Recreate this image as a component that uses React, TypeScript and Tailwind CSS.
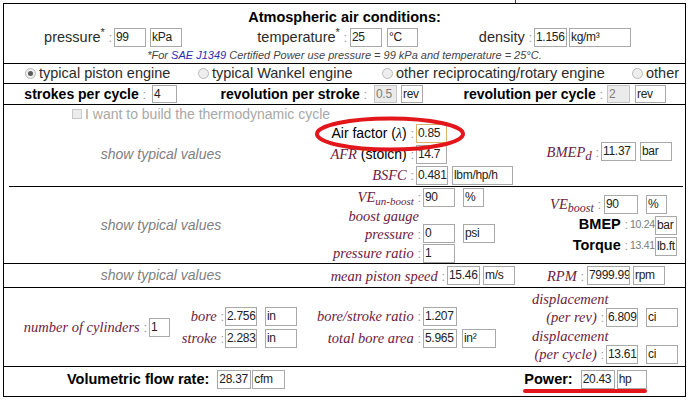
import React from "react";

const SERIF = "font-['Liberation_Serif',serif] italic text-[#6d2142] text-[14.5px]";

function Colon() {
  return (
    <span className="font-normal not-italic font-['Liberation_Sans',Arial,sans-serif] text-[13px] text-[#9a9a9a]">
      &nbsp;:
    </span>
  );
}

type Tone = "normal" | "disabled" | "focus";
const TONES: Record<Tone, string> = {
  normal: "border-[#a9a9a9] bg-white text-[#222]",
  disabled: "border-[#c4c4c4] bg-[#ebebeb] text-[#7d7d7d]",
  focus: "border-[#d8b36a] bg-white text-[#222]",
};

function Box({
  children,
  w,
  cls = "",
  tone = "normal",
  h = "h-[19px]",
}: {
  children?: React.ReactNode;
  w: string;
  cls?: string;
  tone?: Tone;
  h?: string;
}) {
  return (
    <div
      className={`${w} ${h} ${cls} ${TONES[tone]} shrink-0 border pl-[1px] text-[12px] tracking-[-0.3px] leading-[17px] font-normal not-italic font-['Liberation_Sans',Arial,sans-serif] whitespace-nowrap overflow-hidden`}
    >
      {children}
    </div>
  );
}

function Radio({ on }: { on?: boolean }) {
  return (
    <div className="w-[11px] h-[11px] shrink-0 rounded-full border border-[#b9b9b9] bg-[#eeeeee] flex items-center justify-center">
      {on && <div className="w-[5px] h-[5px] rounded-full bg-[#5c5c5c]" />}
    </div>
  );
}

function Typical() {
  return (
    <div className="w-[314px] shrink-0 flex items-center justify-center italic text-[14px] text-[#808080]">
      show typical values
    </div>
  );
}

export default function App() {
  return (
    <div className="w-[691px] h-[400px] bg-white font-['Liberation_Sans',Arial,sans-serif] text-[#2b2b2b] overflow-hidden">
      <div className="h-[3px] flex">
        <div className="ml-[515px] w-px bg-[#553344]" />
      </div>
      <div className="ml-[3px] w-[683px] h-[394px] border border-black flex flex-col">
        {/* Atmospheric air conditions */}
        <div className="h-[60px] shrink-0 border-b border-black flex flex-col">
          <div className="h-[23px] pt-[4px] leading-[18px] text-center font-bold text-[14.5px] text-black">
            Atmospheric air conditions:
          </div>
          <div className="h-[21px] flex items-center text-[14.5px]">
            <div className="w-[108px] shrink-0 text-right whitespace-nowrap">
              pressure<sup>*</sup>
              <Colon />
            </div>
            <Box w="w-[32px]" cls="ml-[2px]">99</Box>
            <Box w="w-[32px]" cls="ml-[4px]">kPa</Box>
            <div className="w-[165px] shrink-0 text-right whitespace-nowrap">
              temperature<sup>*</sup>
              <Colon />
            </div>
            <Box w="w-[32px]" cls="ml-[3px]">25</Box>
            <Box w="w-[31px]" cls="ml-[5px]">°C</Box>
            <div className="w-[114px] shrink-0 text-right whitespace-nowrap">
              density
              <Colon />
            </div>
            <Box w="w-[33px]" cls="ml-[2px]">1.156</Box>
            <Box w="w-[62px]" cls="ml-[2px]">kg/m³</Box>
          </div>
          <div className="h-[14px] leading-[14px] text-center italic text-[11px] text-[#444]">
            *For <span className="text-[#2b2bb0]">SAE J1349</span> Certified Power use pressure = 99 kPa and
            temperature = 25°C.
          </div>
        </div>

        {/* engine type */}
        <div className="h-[20px] shrink-0 border-b border-black flex items-center text-[14.5px]">
          <div className="ml-[21px] w-[173px] shrink-0 flex items-center">
            <Radio on />
            <span className="ml-[3px] whitespace-nowrap">typical piston engine</span>
          </div>
          <div className="w-[184px] shrink-0 flex items-center">
            <Radio />
            <span className="ml-[3px] whitespace-nowrap">typical Wankel engine</span>
          </div>
          <div className="w-[250px] shrink-0 flex items-center">
            <Radio />
            <span className="ml-[3px] whitespace-nowrap">other reciprocating/rotary engine</span>
          </div>
          <div className="flex items-center">
            <Radio />
            <span className="ml-[3px] whitespace-nowrap">other</span>
          </div>
        </div>

        {/* strokes */}
        <div className="h-[21px] shrink-0 border-b border-black flex items-center text-[14px] font-bold text-black">
          <div className="w-[142px] shrink-0 text-right whitespace-nowrap">
            strokes per cycle
            <Colon />
          </div>
          <Box w="w-[25px]" h="h-[18px]" cls="ml-[6px]">4</Box>
          <div className="w-[190px] shrink-0 text-right whitespace-nowrap">
            revolution per stroke
            <Colon />
          </div>
          <Box w="w-[23px]" h="h-[18px]" cls="ml-[7px]" tone="disabled">0.5</Box>
          <Box w="w-[22px]" h="h-[18px]" cls="ml-[4px]">rev</Box>
          <div className="w-[180px] shrink-0 text-right whitespace-nowrap">
            revolution per cycle
            <Colon />
          </div>
          <Box w="w-[23px]" h="h-[18px]" cls="ml-[4px]" tone="disabled">2</Box>
          <Box w="w-[31px]" h="h-[18px]" cls="ml-[5px]">rev</Box>
        </div>

        {/* thermodynamic */}
        <div className="relative h-[81px] shrink-0 flex flex-col">
          <div className="h-[18px] flex items-center text-[14px] text-[#a8a8a8]">
            <div className="ml-[68px] w-[10px] h-[10px] shrink-0 border border-[#c8c8c8] bg-[#ececec]" />
            <span className="ml-[3px] whitespace-nowrap">I want to build the thermodynamic cycle</span>
          </div>
          <div className="h-[63px] flex">
            <Typical />
            <div className="w-[220px] shrink-0 flex flex-col text-[14px] text-black">
              <div className="h-[21px] flex items-center">
                <div className="w-[96px] shrink-0 text-right whitespace-nowrap">
                  Air factor (<span className="font-['Liberation_Serif',serif] italic">λ</span>)
                  <Colon />
                </div>
                <Box w="w-[31px]" cls="ml-[2px]" tone="focus">0.85</Box>
              </div>
              <div className="h-[21px] flex items-center">
                <div className="w-[96px] shrink-0 text-right whitespace-nowrap">
                  <span className={SERIF}>AFR</span> (stoich)
                  <Colon />
                </div>
                <Box w="w-[31px]" cls="ml-[2px]">14.7</Box>
              </div>
              <div className="h-[21px] flex items-center">
                <div className="w-[96px] shrink-0 text-right whitespace-nowrap">
                  <span className={SERIF}>BSFC</span>
                  <Colon />
                </div>
                <Box w="w-[32px]" cls="ml-[2px]">0.481</Box>
                <Box w="w-[61px]" cls="ml-[4px]">lbm/hp/h</Box>
              </div>
            </div>
            <div className="flex-1 flex items-center pb-[6px]">
              <div className="w-[61px] shrink-0 text-right whitespace-nowrap">
                <span className={SERIF}>
                  BMEP<sub className="text-[13px]">d</sub>
                </span>
                <Colon />
              </div>
              <Box w="w-[35px]" cls="ml-[2px]">11.37</Box>
              <Box w="w-[32px]" cls="ml-[4px]">bar</Box>
            </div>
          </div>
          <svg
            className="absolute left-[310px] top-[11px] pointer-events-none"
            width="152"
            height="36"
            viewBox="0 0 152 36"
          >
            <ellipse cx="76" cy="18" rx="73" ry="15.5" fill="none" stroke="#e2161b" strokeWidth="4" />
          </svg>
        </div>
        <div className="h-px shrink-0 ml-[5px] mr-[2px] bg-black" />

        {/* boost */}
        <div className="h-[77px] shrink-0 border-b border-black flex">
          <Typical />
          <div className="w-[220px] shrink-0 flex flex-col">
            <div className="h-[20px] flex items-center">
              <div className="w-[103px] shrink-0 text-right whitespace-nowrap">
                <span className={SERIF}>
                  VE<sub className="text-[11px]">un-boost</sub>
                </span>
                <Colon />
              </div>
              <Box w="w-[32px]" cls="ml-[2px]">90</Box>
              <Box w="w-[21px]" cls="ml-[8px]">%</Box>
            </div>
            <div className="h-[17px] flex items-center">
              <div className="w-[101px] shrink-0 text-right whitespace-nowrap">
                <span className={SERIF}>boost gauge</span>
              </div>
            </div>
            <div className="h-[19px] flex items-center">
              <div className="w-[103px] shrink-0 text-right whitespace-nowrap">
                <span className={SERIF}>pressure</span>
                <Colon />
              </div>
              <Box w="w-[32px]" cls="ml-[2px]">0</Box>
              <Box w="w-[32px]" cls="ml-[8px]">psi</Box>
            </div>
            <div className="h-[20px] flex items-center">
              <div className="w-[103px] shrink-0 text-right whitespace-nowrap">
                <span className={SERIF}>pressure ratio</span>
                <Colon />
              </div>
              <Box w="w-[32px]" cls="ml-[2px]">1</Box>
            </div>
          </div>
          <div className="flex-1 flex flex-col justify-center">
            <div className="h-[21px] flex items-center">
              <div className="w-[63px] shrink-0 text-right whitespace-nowrap">
                <span className={SERIF}>
                  VE<sub className="text-[12px]">boost</sub>
                </span>
                <Colon />
              </div>
              <Box w="w-[34px]" cls="ml-[3px]">90</Box>
              <Box w="w-[21px]" cls="ml-[8px]">%</Box>
            </div>
            <div className="h-[21px] flex items-center">
              <div className="w-[90px] shrink-0 text-right whitespace-nowrap font-bold text-[14.5px] text-black">
                BMEP
                <Colon />
              </div>
              <span className="ml-[2px] w-[25px] shrink-0 whitespace-nowrap text-[10.5px] tracking-[-0.3px] text-[#7a7a7a]">
                10.24
              </span>
              <Box w="w-[22px]">bar</Box>
            </div>
            <div className="h-[21px] flex items-center">
              <div className="w-[90px] shrink-0 text-right whitespace-nowrap font-bold text-[14.5px] text-black">
                Torque
                <Colon />
              </div>
              <span className="ml-[2px] w-[25px] shrink-0 whitespace-nowrap text-[10.5px] tracking-[-0.3px] text-[#7a7a7a]">
                13.41
              </span>
              <Box w="w-[22px]">lb.ft</Box>
            </div>
          </div>
        </div>

        {/* speed */}
        <div className="h-[24px] shrink-0 border-b border-black flex">
          <Typical />
          <div className="flex items-center">
            <div className="w-[127px] shrink-0 text-right whitespace-nowrap">
              <span className={SERIF}>mean piston speed</span>
              <Colon />
            </div>
            <Box w="w-[33px]" cls="ml-[2px]">15.46</Box>
            <Box w="w-[32px]" cls="ml-[3px]">m/s</Box>
            <div className="w-[69px] shrink-0 text-right whitespace-nowrap">
              <span className={SERIF}>RPM</span>
              <Colon />
            </div>
            <Box w="w-[43px]" cls="ml-[3px]">7999.999</Box>
            <Box w="w-[32px]" cls="ml-[3px]">rpm</Box>
          </div>
        </div>

        {/* geometry */}
        <div className="h-[79px] shrink-0 border-b border-black flex items-center">
          <div className="w-[143px] shrink-0 text-right whitespace-nowrap">
            <span className={SERIF}>number of cylinders</span>
            <Colon />
          </div>
          <Box w="w-[21px]" cls="ml-[2px]">1</Box>
          <div className="w-[127px] shrink-0 flex flex-col">
            <div className="h-[22px] flex items-center">
              <div className="w-[54px] shrink-0 text-right whitespace-nowrap">
                <span className={SERIF}>bore</span>
                <Colon />
              </div>
              <Box w="w-[32px]" cls="ml-[1px]">2.756</Box>
              <Box w="w-[32px]" cls="ml-[8px]">in</Box>
            </div>
            <div className="h-[22px] flex items-center">
              <div className="w-[54px] shrink-0 text-right whitespace-nowrap">
                <span className={SERIF}>stroke</span>
                <Colon />
              </div>
              <Box w="w-[32px]" cls="ml-[1px]">2.283</Box>
              <Box w="w-[32px]" cls="ml-[8px]">in</Box>
            </div>
          </div>
          <div className="w-[235px] shrink-0 flex flex-col">
            <div className="h-[22px] flex items-center">
              <div className="w-[124px] shrink-0 text-right whitespace-nowrap">
                <span className={SERIF}>bore/stroke ratio</span>
                <Colon />
              </div>
              <Box w="w-[34px]" cls="ml-[2px]">1.207</Box>
            </div>
            <div className="h-[22px] flex items-center">
              <div className="w-[124px] shrink-0 text-right whitespace-nowrap">
                <span className={SERIF}>total bore area</span>
                <Colon />
              </div>
              <Box w="w-[34px]" cls="ml-[2px]">5.965</Box>
              <Box w="w-[34px]" cls="ml-[5px]">in²</Box>
            </div>
          </div>
          <div className="flex flex-col">
            <div className="flex items-end">
              <div className="w-[72px] shrink-0 text-right leading-[18px] flex flex-col whitespace-nowrap">
                <span className={SERIF}>displacement</span>
                <span>
                  <span className={SERIF}>(per rev)</span>
                  <Colon />
                </span>
              </div>
              <Box w="w-[32px]" cls="ml-[2px]">6.809</Box>
              <Box w="w-[32px]" cls="ml-[8px]">ci</Box>
            </div>
            <div className="flex items-end">
              <div className="w-[72px] shrink-0 text-right leading-[18px] flex flex-col whitespace-nowrap">
                <span className={SERIF}>displacement</span>
                <span>
                  <span className={SERIF}>(per cycle)</span>
                  <Colon />
                </span>
              </div>
              <Box w="w-[32px]" cls="ml-[2px]">13.61</Box>
              <Box w="w-[32px]" cls="ml-[8px]">ci</Box>
            </div>
          </div>
        </div>

        {/* results */}
        <div className="h-[29px] shrink-0 flex items-start">
          <div className="ml-[63px] mt-[3px] h-[19px] flex items-center">
            <span className="font-bold text-[14.5px] text-black whitespace-nowrap">Volumetric flow rate:</span>
            <Box w="w-[34px]" cls="ml-[8px]">28.37</Box>
            <Box w="w-[33px]" cls="ml-[1px]">cfm</Box>
          </div>
          <div className="ml-[238px] mt-[3px] flex flex-col">
            <div className="h-[19px] flex items-center">
              <span className="ml-[1px] font-bold text-[14.5px] text-black whitespace-nowrap">Power:</span>
              <Box w="w-[34px]" cls="ml-[8px]">20.43</Box>
              <Box w="w-[30px]" cls="ml-[2px]">hp</Box>
            </div>
            <div className="w-[124px] h-[4px] rounded-full bg-[#e2161b]" />
          </div>
        </div>
      </div>
    </div>
  );
}
